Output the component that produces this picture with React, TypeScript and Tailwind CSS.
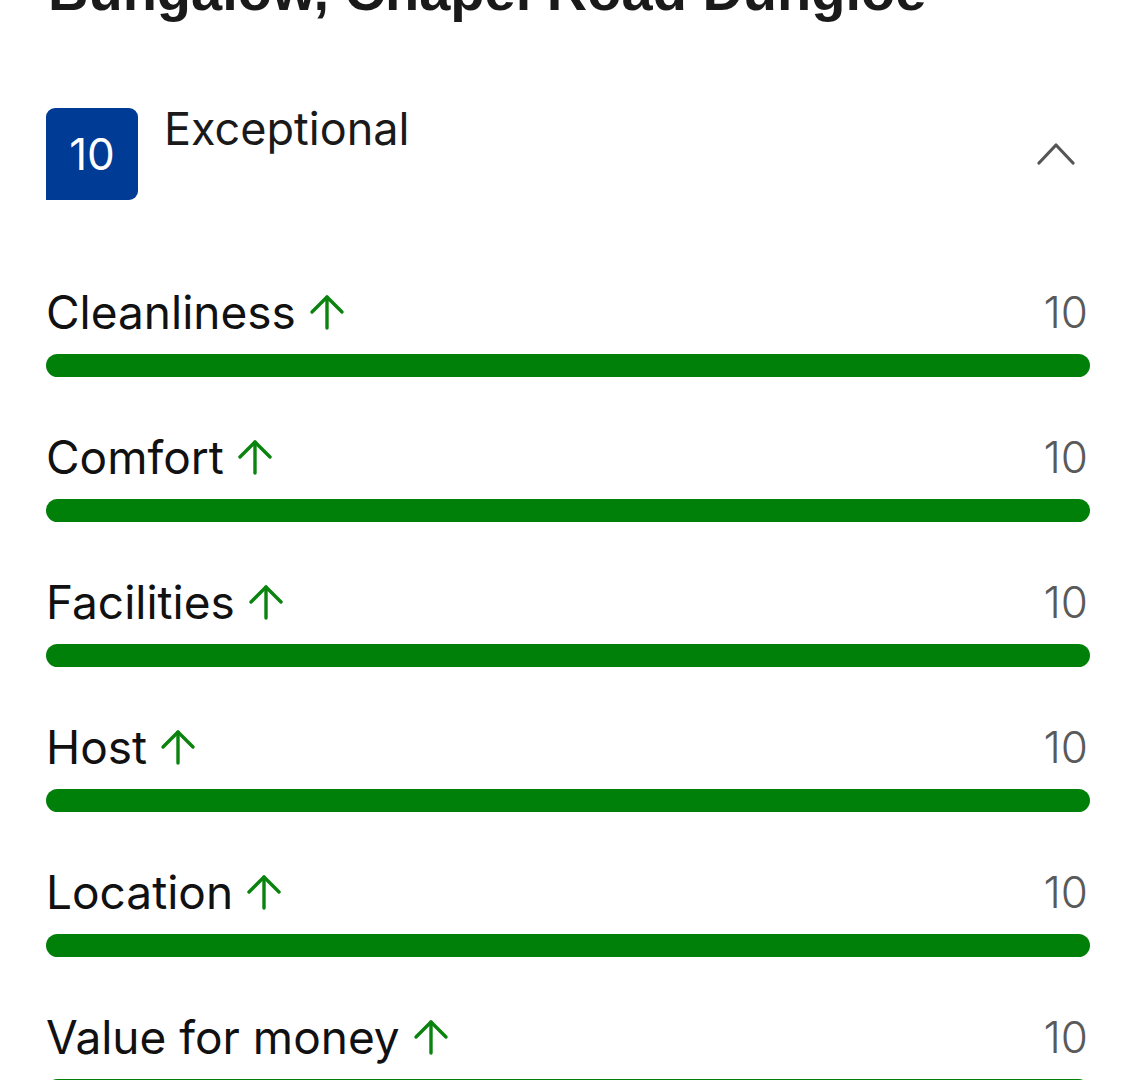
import React from 'react';

const ratings = [
  { label: 'Cleanliness', score: 10 },
  { label: 'Comfort', score: 10 },
  { label: 'Facilities', score: 10 },
  { label: 'Host', score: 10 },
  { label: 'Location', score: 10 },
  { label: 'Value for money', score: 10 },
];

function ArrowUp() {
  return (
    <svg width="36" height="36" viewBox="0 0 36 36" fill="none" stroke="#0b840f" strokeWidth="3.4" strokeLinecap="round" strokeLinejoin="round">
      <path d="M18 3 V34" />
      <path d="M3 18 L18 3 L33 18" />
    </svg>
  );
}

function ChevronUp() {
  return (
    <svg width="38" height="26" viewBox="0 0 38 26" fill="none" stroke="#555555" strokeWidth="3.2" strokeLinecap="round" strokeLinejoin="round">
      <path d="M2 23 L19 5 L36 23" />
    </svg>
  );
}

export default function App() {
  return (
    <div className="w-[1131px] h-[1080px] overflow-hidden bg-white" style={{ fontFamily: 'Inter, "Noto Sans", sans-serif' }}>
      <div className="pl-[46px] pr-[41px]">
        <h1
          className="mt-[-37px] text-[56px] leading-[56px] font-bold text-[#1a1a1a] whitespace-nowrap pl-[2px]"
          style={{ fontFamily: '"Liberation Sans", Arial, sans-serif' }}
        >
          Bungalow, Chapel Road Dungloe
        </h1>

        <div className="mt-[89px] flex items-start justify-between">
          <div className="flex items-start gap-[26px]">
            <div className="w-[92px] h-[92px] bg-[#003b95] rounded-t-[9px] rounded-br-[9px] flex items-center justify-center">
              <span className="text-white text-[44px] leading-none">10</span>
            </div>
            <div className="mt-[-5px] text-[45px] leading-[52px] text-[#1a1a1a]">Exceptional</div>
          </div>
          <div className="mt-[32px] mr-[15px]">
            <ChevronUp />
          </div>
        </div>

        <div className="mt-[83px] flex flex-col gap-[51px]">
          {ratings.map((r) => (
            <div key={r.label}>
              <div className="flex items-end justify-between h-[58px]">
                <div className="flex items-center gap-[13px]">
                  <span className="text-[46px] leading-[58px] text-[#111111]">{r.label}</span>
                  <ArrowUp />
                </div>
                <span className="text-[44px] leading-[58px] font-light text-[#5a5a5a] mr-[2px]">{r.score}</span>
              </div>
              <div className="mt-[13px] h-[23px] w-full rounded-full bg-[#008009]" />
            </div>
          ))}
        </div>
      </div>
    </div>
  );
}
